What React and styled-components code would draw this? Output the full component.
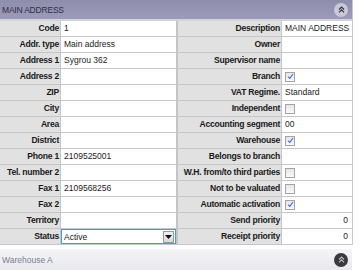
import React from 'react'
import styled, { createGlobalStyle } from 'styled-components'

const GlobalStyle = createGlobalStyle`
  html, body {
    margin: 0;
    padding: 0;
    background: #ffffff;
  }
  body {
    font-family: "Liberation Sans", Arial, sans-serif;
    font-size: 8.5px;
  }
`

const rows = [
  { l: 'Code', lv: '1', r: 'Description', rv: 'MAIN ADDRESS' },
  { l: 'Addr. type', lv: 'Main address', r: 'Owner', rv: '' },
  { l: 'Address 1', lv: 'Sygrou 362', r: 'Supervisor name', rv: '' },
  { l: 'Address 2', lv: '', r: 'Branch', check: true },
  { l: 'ZIP', lv: '', r: 'VAT Regime.', rv: 'Standard' },
  { l: 'City', lv: '', r: 'Independent', check: false },
  { l: 'Area', lv: '', r: 'Accounting segment', rv: '00' },
  { l: 'District', lv: '', r: 'Warehouse', check: true },
  { l: 'Phone 1', lv: '2109525001', r: 'Belongs to branch', rv: '' },
  { l: 'Tel. number 2', lv: '', r: 'W.H. from/to third parties', check: false },
  { l: 'Fax 1', lv: '2109568256', r: 'Not to be valuated', check: false },
  { l: 'Fax 2', lv: '', r: 'Automatic activation', check: true },
  { l: 'Territory', lv: '', r: 'Send priority', rv: '0', num: true },
  { l: 'Status', lv: 'Active', select: true, r: 'Receipt priority', rv: '0', num: true },
]

export default function App() {
  return (
    <>
      <GlobalStyle />
      <Page>
        <Panel>
          <Header>
            <Title>MAIN ADDRESS</Title>
            <CollapseButton dark={false}>
              <Chevrons color="#333" />
            </CollapseButton>
          </Header>
          <Grid>
            {rows.map((row) => (
              <Row key={row.l}>
                <Label width={61}>{row.l}</Label>
                {row.select ? (
                  <SelectCell>
                    <SelectText>{row.lv}</SelectText>
                    <DropButton>
                      <svg width="7" height="4" viewBox="0 0 7 4">
                        <polygon points="0,0 7,0 3.5,4" fill="#111" />
                      </svg>
                    </DropButton>
                  </SelectCell>
                ) : (
                  <Value width={115}>{row.lv}</Value>
                )}
                <Divider />
                <Label width={104}>{row.r}</Label>
                {row.check !== undefined ? (
                  <Value width={69}>
                    <Check checked={row.check}>
                      {row.check && (
                        <svg width="7" height="7" viewBox="0 0 7 7">
                          <path d="M1 3.6 L2.8 5.5 L6 1" stroke="#4a63c8" strokeWidth="1.1" fill="none" />
                        </svg>
                      )}
                    </Check>
                  </Value>
                ) : (
                  <Value width={69} num={row.num}>{row.rv}</Value>
                )}
              </Row>
            ))}
          </Grid>
        </Panel>
        <Footer>
          <FooterTitle>Warehouse A</FooterTitle>
          <CollapseButton dark>
            <Chevrons color="#bbb" />
          </CollapseButton>
        </Footer>
      </Page>
    </>
  )
}

function Chevrons({ color }) {
  return (
    <svg width="7" height="7" viewBox="0 0 7 7">
      <path d="M1 3.5 L3.5 1 L6 3.5 M1 6.3 L3.5 3.8 L6 6.3" stroke={color} strokeWidth="1.1" fill="none" />
    </svg>
  )
}

const Page = styled.div`
  width: 360px;
  height: 270px;
  overflow: hidden;
  display: flex;
  flex-direction: column;
`

const Panel = styled.div`
  width: 352px;
  border-right: 1px solid #c8c8d0;
  display: flex;
  flex-direction: column;
`

const Header = styled.div`
  height: 19px;
  display: flex;
  align-items: center;
  justify-content: space-between;
  padding: 0 4px 0 2px;
  background: linear-gradient(#8f8dac, #9d9bb9);
  border-bottom: 2px solid #d2d2dc;
`

const Title = styled.span`
  color: #2f2f48;
  font-size: 8.5px;
  letter-spacing: -0.2px;
`

const CollapseButton = styled.div`
  width: 14px;
  height: 14px;
  border-radius: 50%;
  display: flex;
  align-items: center;
  justify-content: center;
  background: ${({ dark }) => (dark ? '#3a3a3e' : '#c9c8d8')};
`

const Grid = styled.div`
  display: flex;
  flex-direction: column;
`

const Row = styled.div`
  display: flex;
  height: 16px;
  border-bottom: 1px solid #c6c6c6;
  box-sizing: border-box;
`

const Label = styled.div`
  width: ${({ width }) => width}px;
  flex: none;
  box-sizing: border-box;
  background: #e1e1e1;
  border-right: 1px solid #c6c6c6;
  font-weight: bold;
  font-size: 8.6px;
  color: #1a1a1a;
  text-align: right;
  padding-right: 1px;
  line-height: 15px;
  white-space: nowrap;
  overflow: hidden;
  letter-spacing: -0.25px;
`

const Value = styled.div`
  width: ${({ width }) => width}px;
  flex: none;
  box-sizing: border-box;
  background: #fff;
  color: #222;
  line-height: 15px;
  padding: 0 3px;
  text-align: ${({ num }) => (num ? 'right' : 'left')};
  white-space: nowrap;
  display: flex;
  align-items: center;
  justify-content: ${({ num }) => (num ? 'flex-end' : 'flex-start')};
`

const Divider = styled.div`
  width: 2px;
  flex: none;
  background: #c4c4c4;
`

const SelectCell = styled.div`
  width: 115px;
  flex: none;
  box-sizing: border-box;
  background: #fff;
  border: 1px solid #4d97e0;
  display: flex;
  align-items: center;
  justify-content: space-between;
  padding: 0 1px 0 2px;
`

const SelectText = styled.span`
  color: #222;
`

const DropButton = styled.div`
  width: 11px;
  height: 12px;
  box-sizing: border-box;
  background: linear-gradient(#f0f0f0, #d8d8d8);
  border: 1px solid #9a9a9a;
  display: flex;
  align-items: center;
  justify-content: center;
`

const Check = styled.div`
  width: 10px;
  height: 10px;
  box-sizing: border-box;
  border: 1px solid #a4a4a4;
  background: linear-gradient(#e6e6e6, #fafafa);
  display: flex;
  align-items: center;
  justify-content: center;
`

const Footer = styled.div`
  margin-top: 4px;
  width: 352px;
  height: 22px;
  display: flex;
  align-items: center;
  justify-content: space-between;
  padding: 0 4px 0 2px;
  box-sizing: border-box;
  background: linear-gradient(#f4f4f7, #e9e9ee);
`

const FooterTitle = styled.span`
  color: #7c7c98;
  font-size: 8.5px;
`
